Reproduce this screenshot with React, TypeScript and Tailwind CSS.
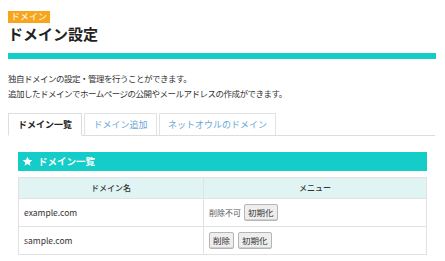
const font = { fontFamily: '"Noto Sans CJK JP", "Noto Sans", sans-serif' };

// Small gray button used in the menu column
const Btn = ({ label }: { label: string }) => {
  return (
    <button className="h-[17px] px-[3px] text-[8.5px] leading-[15px] text-[#333] bg-[#eeeeee] border border-[#b5b5b5] rounded-[2px] shadow-[inset_0_-1px_0_#d0d0d0]">
      {label}
    </button>
  );
};

const Tabs = () => {
  return (
    <div className="mt-[12px] flex items-end gap-[2px] border-b border-[#dddddd] h-[23px] mr-[1px]">
      <div className="h-[23px] w-[74px] -mb-px bg-white border border-[#dddddd] border-b-white flex items-center justify-center text-[9px] text-[#222] font-bold">
        ドメイン一覧
      </div>
      <div className="h-[22px] w-[73px] border border-b-0 border-[#e3e3e3] flex items-center justify-center text-[9px] text-[#6aa8d6]">
        ドメイン追加
      </div>
      <div className="h-[22px] w-[117px] border border-b-0 border-[#e3e3e3] flex items-center justify-center text-[9px] text-[#6aa8d6]">
        ネットオウルのドメイン
      </div>
    </div>
  );
};

const DomainTable = () => {
  return (
    <div className="mt-[16px] ml-[10px] mr-[9px]">
      <div className="h-[19px] bg-[#14ccc8] flex items-center pl-[4px] gap-[5px] text-white text-[9.5px] font-bold">
        <svg width="11" height="11" viewBox="0 0 24 24" fill="white">
          <path d="M12 1.5l3.1 6.9 7.4.7-5.6 5 1.7 7.4L12 17.6l-6.6 3.9 1.7-7.4-5.6-5 7.4-.7z" />
        </svg>
        ドメイン一覧
      </div>
      <table className="mt-[6px] w-full border-collapse text-[8.5px] text-[#333]">
        <thead>
          <tr className="h-[21px] bg-[#dff4f3]">
            <th className="w-[185px] border border-[#e2e2e2] font-medium text-[8px]">ドメイン名</th>
            <th className="border border-[#e2e2e2] font-medium text-[8px]">メニュー</th>
          </tr>
        </thead>
        <tbody>
          <tr className="h-[28px]">
            <td className="border border-[#e2e2e2] pl-[5px]">example.com</td>
            <td className="border border-[#e2e2e2] pl-[5px]">
              <div className="flex items-center gap-[3px]">
                <span className="text-[#555] text-[8px]">削除不可</span>
                <Btn label="初期化" />
              </div>
            </td>
          </tr>
          <tr className="h-[28px]">
            <td className="border border-[#e2e2e2] pl-[5px]">sample.com</td>
            <td className="border border-[#e2e2e2] pl-[5px]">
              <div className="flex items-center gap-[4px]">
                <Btn label="削除" />
                <Btn label="初期化" />
              </div>
            </td>
          </tr>
        </tbody>
      </table>
    </div>
  );
}

export default function App() {
  return (
    <div className="w-[445px] h-[261px] bg-white pl-[8px] pr-[9px] pt-[11px]" style={font}>
      <div className="w-fit h-[12px] px-[3px] bg-[#f7a51d] text-white text-[9px] leading-[12px]">ドメイン</div>
      <h1 className="mt-[1px] text-[15px] leading-[20px] font-bold text-[#222]">ドメイン設定</h1>
      <div className="mt-[9px] h-[6px] bg-[#14ccc8]" />
      <p className="mt-[12px] text-[8.5px] tracking-[-0.5px] leading-[15px] text-[#333]">
        独自ドメインの設定・管理を行うことができます。
        <br />
        追加したドメインでホームページの公開やメールアドレスの作成ができます。
      </p>
      <Tabs />
      <DomainTable />
    </div>
  );
}
